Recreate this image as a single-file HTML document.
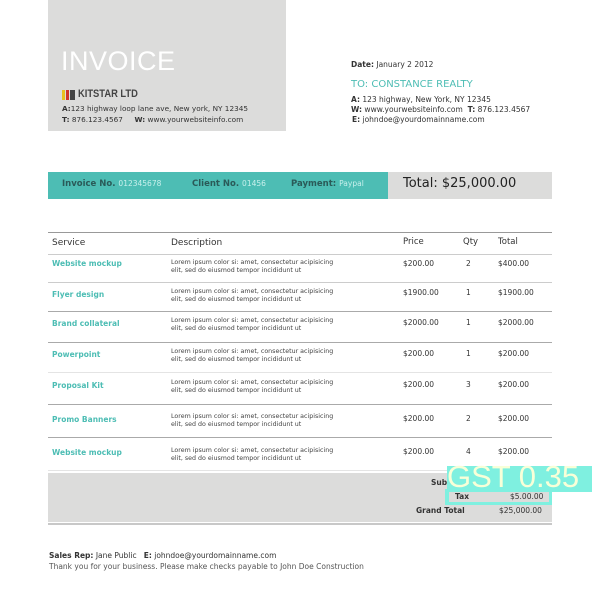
<!DOCTYPE html>
<html><head><meta charset="utf-8"><style>
*{margin:0;padding:0;box-sizing:border-box}
body{width:600px;height:600px;background:#fff;position:relative;overflow:hidden;font-family:"DejaVu Sans","Liberation Sans",sans-serif;color:#333}
.a{position:absolute;white-space:nowrap}
.s{font-size:7.5px}
.t{color:#4dbdb4;font-size:7.5px;font-weight:bold}
.d{font-size:6.3px;line-height:8px;color:#444}
.hl{position:absolute;left:48px;width:504px;height:1px;background:#ccc}
</style></head><body>
<div class="a" style="left:48px;top:0;width:238px;height:131px;background:#dcdcdb"></div>
<div class="a" style="left:61px;top:46px;font-size:27px;color:#fff;font-family:'Liberation Sans',sans-serif;letter-spacing:0.5px">INVOICE</div>
<div class="a" style="left:62px;top:90px;width:3px;height:10px;background:#e8c020"></div>
<div class="a" style="left:66px;top:90px;width:3px;height:10px;background:#d0342a"></div>
<div class="a" style="left:70px;top:90px;width:5px;height:10px;background:#444"></div>
<div class="a" style="left:78px;top:88px;font-size:11px;font-weight:bold;color:#444;font-family:'Liberation Sans Narrow','Liberation Sans',sans-serif;transform:scaleX(0.85);transform-origin:left">KITSTAR LTD</div>
<div class="a s" style="left:62px;top:104px;font-size:7.3px"><b>A:</b>123 highway loop lane ave, New york, NY 12345</div>
<div class="a s" style="left:62px;top:115px;font-size:7.3px"><b>T:</b> 876.123.4567 &nbsp;&nbsp;&nbsp; <b>W:</b> www.yourwebsiteinfo.com</div>
<div class="a s" style="left:351px;top:60px"><b>Date:</b> January 2 2012</div>
<div class="a" style="left:351px;top:79px;font-size:10px;color:#4dbdb4">TO: CONSTANCE REALTY</div>
<div class="a s" style="left:351px;top:95px"><b>A:</b> 123 highway, New York, NY 12345</div>
<div class="a s" style="left:351px;top:105px"><b>W:</b> www.yourwebsiteinfo.com &nbsp;<b>T:</b> 876.123.4567</div>
<div class="a s" style="left:352px;top:115px"><b>E:</b> johndoe@yourdomainname.com</div>
<div class="a" style="left:48px;top:172px;width:340px;height:27px;background:#4dbdb4"></div>
<div class="a" style="left:388px;top:172px;width:164px;height:27px;background:#dcdcdb"></div>
<div class="a" style="left:62px;top:179px;font-size:8.5px;color:#2a5a58;font-weight:bold">Invoice No. <span style="color:#c8f0ec;font-size:7.5px;font-weight:normal">012345678</span></div>
<div class="a" style="left:192px;top:179px;font-size:8.5px;color:#2a5a58;font-weight:bold">Client No. <span style="color:#c8f0ec;font-size:7.5px;font-weight:normal">01456</span></div>
<div class="a" style="left:291px;top:179px;font-size:8.5px;color:#2a5a58;font-weight:bold">Payment: <span style="color:#c8f0ec;font-size:7.5px;font-weight:normal">Paypal</span></div>
<div class="a" style="left:403px;top:176px;font-size:13px;color:#222">Total: $25,000.00</div>
<div class="hl" style="top:232px;background:#999"></div>
<div class="a" style="left:52px;top:238px;font-size:9px">Service</div>
<div class="a" style="left:171px;top:238px;font-size:9px">Description</div>
<div class="a" style="left:403px;top:237px;font-size:8.5px">Price</div>
<div class="a" style="left:463px;top:237px;font-size:8.5px">Qty</div>
<div class="a" style="left:498px;top:237px;font-size:8.5px">Total</div>
<div class="hl" style="top:254px"></div>
<div class="hl" style="top:282px"></div>
<div class="hl" style="top:311px;background:#aaa"></div>
<div class="hl" style="top:342px;background:#aaa"></div>
<div class="hl" style="top:372px;background:#e4e4e4"></div>
<div class="hl" style="top:404px;background:#aaa"></div>
<div class="hl" style="top:437px;background:#aaa"></div>
<div class="hl" style="top:470px;background:#e4e4e4"></div>

<div class="a t" style="left:52px;top:259px">Website mockup</div><div class="a d" style="left:171px;top:259px">Lorem ipsum color si: amet, consectetur acipisicing<br>elit, sed do eiusmod tempor incididunt ut</div><div class="a s" style="left:403px;top:259px">$200.00</div><div class="a s" style="left:466px;top:259px">2</div><div class="a s" style="left:498px;top:259px">$400.00</div>
<div class="a t" style="left:52px;top:290px">Flyer design</div><div class="a d" style="left:171px;top:288px">Lorem ipsum color si: amet, consectetur acipisicing<br>elit, sed do eiusmod tempor incididunt ut</div><div class="a s" style="left:403px;top:288px">$1900.00</div><div class="a s" style="left:466px;top:288px">1</div><div class="a s" style="left:498px;top:288px">$1900.00</div>
<div class="a t" style="left:52px;top:319px">Brand collateral</div><div class="a d" style="left:171px;top:317px">Lorem ipsum color si: amet, consectetur acipisicing<br>elit, sed do eiusmod tempor incididunt ut</div><div class="a s" style="left:403px;top:318px">$2000.00</div><div class="a s" style="left:466px;top:318px">1</div><div class="a s" style="left:498px;top:318px">$2000.00</div>
<div class="a t" style="left:52px;top:350px">Powerpoint</div><div class="a d" style="left:171px;top:348px">Lorem ipsum color si: amet, consectetur acipisicing<br>elit, sed do eiusmod tempor incididunt ut</div><div class="a s" style="left:403px;top:349px">$200.00</div><div class="a s" style="left:466px;top:349px">1</div><div class="a s" style="left:498px;top:349px">$200.00</div>
<div class="a t" style="left:52px;top:381px">Proposal Kit</div><div class="a d" style="left:171px;top:379px">Lorem ipsum color si: amet, consectetur acipisicing<br>elit, sed do eiusmod tempor incididunt ut</div><div class="a s" style="left:403px;top:380px">$200.00</div><div class="a s" style="left:466px;top:380px">3</div><div class="a s" style="left:498px;top:380px">$200.00</div>
<div class="a t" style="left:52px;top:415px">Promo Banners</div><div class="a d" style="left:171px;top:413px">Lorem ipsum color si: amet, consectetur acipisicing<br>elit, sed do eiusmod tempor incididunt ut</div><div class="a s" style="left:403px;top:414px">$200.00</div><div class="a s" style="left:466px;top:414px">2</div><div class="a s" style="left:498px;top:414px">$200.00</div>
<div class="a t" style="left:52px;top:448px">Website mockup</div><div class="a d" style="left:171px;top:447px">Lorem ipsum color si: amet, consectetur acipisicing<br>elit, sed do eiusmod tempor incididunt ut</div><div class="a s" style="left:403px;top:447px">$200.00</div><div class="a s" style="left:466px;top:447px">4</div><div class="a s" style="left:498px;top:447px">$200.00</div>

<div class="a" style="left:48px;top:473px;width:504px;height:49px;background:#dcdcdb"></div>
<div class="a" style="left:48px;top:523px;width:504px;height:2px;background:#c8c8c8"></div>
<div class="a s" style="left:431px;top:478px;font-weight:bold">Sub</div>
<div class="a" style="left:445px;top:489px;width:107px;height:16px;background:#7ff0e0"></div>
<div class="a" style="left:449px;top:491px;width:100px;height:11px;background:#dcdcdb"></div>
<div class="a s" style="left:455px;top:492px;font-weight:bold">Tax</div>
<div class="a s" style="left:510px;top:492px">$5.00.00</div>
<div class="a s" style="left:416px;top:506px;font-weight:bold">Grand Total</div>
<div class="a s" style="left:499px;top:506px">$25,000.00</div>
<div class="a" style="left:447px;top:466px;width:145px;height:26px;background:#7ff0e0"></div>
<div class="a" style="left:447px;top:461px;font-size:31px;line-height:32px;color:#f8ffd8;font-family:'Liberation Sans',sans-serif">GST 0.35</div>
<div class="a s" style="left:49px;top:551px"><b>Sales Rep:</b> Jane Public &nbsp;&nbsp;<b>E:</b> johndoe@yourdomainname.com</div>
<div class="a s" style="left:49px;top:562px;color:#555">Thank you for your business. Please make checks payable to John Doe Construction</div>
</body></html>
